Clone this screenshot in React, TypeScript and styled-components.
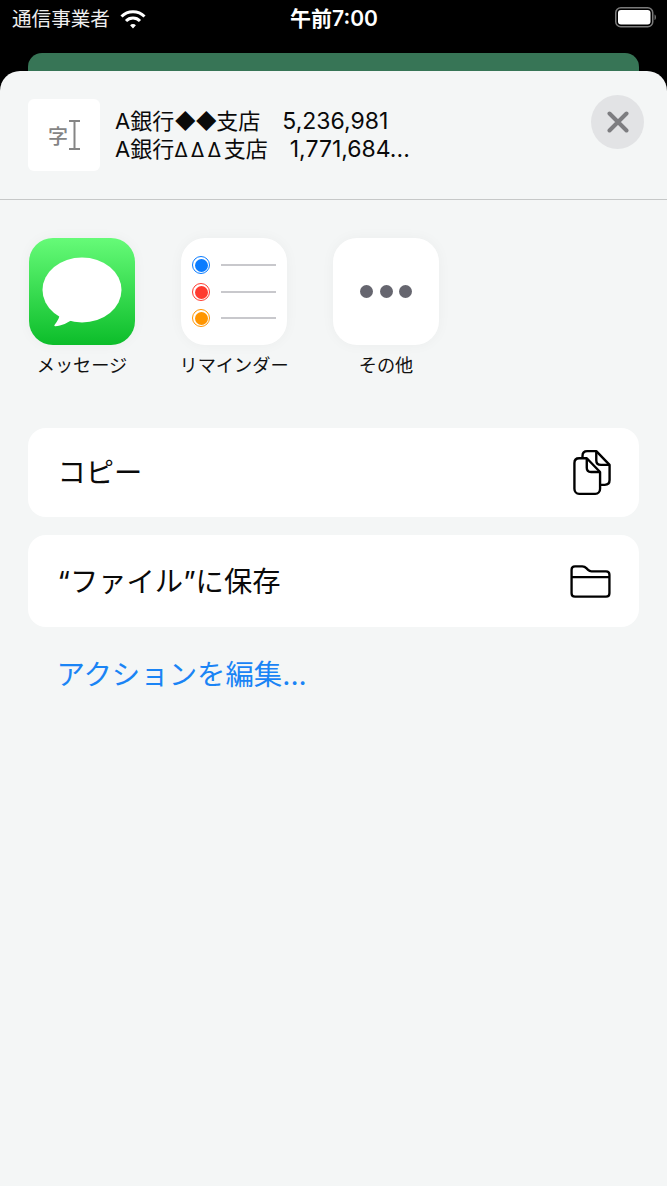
import styled, { createGlobalStyle } from "styled-components";

const GlobalStyle = createGlobalStyle`
  html, body {
    margin: 0;
    padding: 0;
    background: #000;
  }
  body {
    font-family: Inter, "Noto Sans CJK JP", sans-serif;
  }
`;

const Screen = styled.div`
  width: 667px;
  height: 1186px;
  overflow: hidden;
  display: flex;
  flex-direction: column;
  background: #000;
`;

const StatusBar = styled.div`
  height: 53px;
  flex: none;
  display: grid;
  grid-template-columns: 1fr auto 1fr;
  align-items: start;
  padding: 6px 11px 0 12px;
  box-sizing: border-box;
  color: #fff;
`;

const Carrier = styled.div`
  display: flex;
  align-items: center;
  gap: 10px;
  font-size: 19.6px;
  line-height: 26px;
  color: #eee;
`;

const Clock = styled.div`
  font-size: 21px;
  line-height: 26px;
  font-weight: 600;
`;

const Battery = styled.div`
  justify-self: end;
  display: flex;
  padding-top: 1px;
`;

const BackCard = styled.div`
  height: 18px;
  flex: none;
  margin: 0 28px;
  background: #377556;
  border-radius: 14px 14px 0 0;
`;

const Sheet = styled.div`
  flex: 1;
  background: #f4f6f6;
  border-radius: 20px 20px 0 0;
  display: flex;
  flex-direction: column;
`;

const Header = styled.div`
  height: 129px;
  flex: none;
  box-sizing: border-box;
  border-bottom: 1px solid #c6c8c8;
  display: flex;
  align-items: flex-start;
  padding: 28px 23px 0 28px;
`;

const Thumb = styled.div`
  width: 72px;
  height: 72px;
  flex: none;
  background: #fff;
  border-radius: 6px;
  display: flex;
  align-items: center;
  justify-content: center;
  gap: 1px;
  color: #858585;
  font-size: 20px;
  font-weight: 500;
`;

const Preview = styled.div`
  flex: 1;
  margin-left: 15px;
  padding-top: 8px;
  font-size: 22px;
  line-height: 28px;
  color: #0a0a0a;
  white-space: pre;
`;

const Figures = styled.span`
  font-size: 23px;
  line-height: 1;
`;

const Diamonds = styled.span`
  font-size: 21px;
  line-height: 1;
  letter-spacing: -1px;
`;

const Deltas = styled.span`
  font-size: 20px;
  line-height: 1;
  letter-spacing: 2.7px;
`;

const CloseButton = styled.div`
  width: 53px;
  height: 54px;
  margin-top: -4px;
  flex: none;
  border-radius: 50%;
  background: #e2e3e5;
  display: flex;
  align-items: center;
  justify-content: center;
`;

const AppGrid = styled.div`
  display: flex;
  gap: 46px;
  padding: 38px 0 0 29px;
`;

const AppItem = styled.div`
  width: 106px;
  display: flex;
  flex-direction: column;
  align-items: center;
`;

const AppTile = styled.div<{ $green?: boolean }>`
  width: 106px;
  height: 107px;
  border-radius: 24px;
  background: ${(p) => (p.$green ? "linear-gradient(#66fb78, #0cbd2a)" : "#fff")};
  box-shadow: 0 0 14px rgba(0, 0, 0, 0.04);
  display: flex;
  align-items: center;
  justify-content: center;
`;

const AppLabel = styled.div`
  margin-top: 8px;
  font-size: 18.2px;
  line-height: 24px;
  color: #111;
  white-space: nowrap;
`;

const Actions = styled.div`
  display: flex;
  flex-direction: column;
  gap: 18px;
  margin: 51px 28px 0;
`;

const ActionRow = styled.div<{ $height: number }>`
  height: ${(p) => p.$height}px;
  border-radius: 18px;
  background: #fff;
  display: flex;
  align-items: center;
  justify-content: space-between;
  padding: 0 28px 0 29.5px;
`;

const ActionLabel = styled.div`
  margin-bottom: 4px;
  font-size: 28.3px;
  color: #0a0a0a;
`;

const EditLink = styled.div`
  margin: 30px 0 0 56.5px;
  font-size: 28.4px;
  line-height: 36px;
  color: #1a84f5;
`;

const ReminderRow = styled.div`
  display: flex;
  align-items: center;
  gap: 10.5px;
`;

const ReminderList = styled.div`
  display: flex;
  flex-direction: column;
  gap: 8.5px;
`;

const ReminderDot = styled.div<{ $color: string }>`
  width: 18px;
  height: 18px;
  box-sizing: border-box;
  border-radius: 50%;
  border: 1.5px solid ${(p) => p.$color};
  padding: 1.5px;
  background: ${(p) => p.$color};
  background-clip: content-box;
`;

const ReminderLine = styled.div`
  width: 55px;
  height: 2px;
  background: #c8c8cc;
`;

const MoreDots = styled.div`
  display: flex;
  gap: 6.5px;
`;

const MoreDot = styled.div`
  width: 13px;
  height: 13px;
  border-radius: 50%;
  background: #66666f;
`;

const reminders = ["#0a7cff", "#ff3b30", "#ff9500"];

const App = () => {
  return (
    <Screen>
      <GlobalStyle />
      <StatusBar>
        <Carrier>
          通信事業者
          <svg width="26" height="19" viewBox="0 0 26 19" fill="none" stroke="#fff" strokeWidth="3">
            <path d="M1.500 6.500C4.500 3.400 8.500 1.700 13 1.700s8.500 1.700 11.500 4.800" />
            <path d="M6 11c1.800-1.900 4.200-3 7-3s5.200 1.100 7 3" />
            <path d="M13 14.100c-1.100 0-2.100.4-2.900 1.100l2.900 3.300 2.900-3.300c-.8-.7-1.800-1.100-2.900-1.100z" fill="#fff" stroke="none" />
          </svg>
        </Carrier>
        <Clock>午前7:00</Clock>
        <Battery>
          <svg width="41" height="21" viewBox="0 0 41 21">
            <rect x="0.750" y="0.750" width="37" height="19" rx="5" fill="none" stroke="#7b7b7b" strokeWidth="1.500" />
            <rect x="3" y="3" width="32.500" height="14.500" rx="3" fill="#fff" />
            <path d="M39.500 7.500v5.500c1-.3 1.500-1.400 1.500-2.750s-.5-2.450-1.500-2.750z" fill="#6f6f6f" />
          </svg>
        </Battery>
      </StatusBar>
      <BackCard />
      <Sheet>
        <Header>
          <Thumb>
            字
            <svg width="11" height="30" viewBox="0 0 11 30" stroke="#858585" strokeWidth="2" fill="none">
              <path d="M0 1h11M5.500 1v28M0 29h11" />
            </svg>
          </Thumb>
          <Preview>
            A銀行<Diamonds>◆◆</Diamonds>支店　<Figures>5,236,981</Figures>
            {"\n"}
            A銀行<Deltas>∆∆∆</Deltas>支店　<Figures>1,771,684...</Figures>
          </Preview>
          <CloseButton>
            <svg width="22" height="22" viewBox="0 0 22 22" stroke="#7d7d80" strokeWidth="4" strokeLinecap="round">
              <path d="M2.500 2.500l17 17M19.500 2.500l-17 17" />
            </svg>
          </CloseButton>
        </Header>
        <AppGrid>
          <AppItem>
            <AppTile $green>
              <svg width="80" height="72" viewBox="0 -1.500 80 72" fill="#fff">
                <ellipse cx="40" cy="32.500" rx="39.500" ry="32.500" />
                <path d="M19 53c-1 6-3.500 11-6.500 14.500-.6.800 0 1.300.8 1.200 6-.5 13-3 18-7.700z" />
              </svg>
            </AppTile>
            <AppLabel>メッセージ</AppLabel>
          </AppItem>
          <AppItem>
            <AppTile>
              <ReminderList>
                {reminders.map((color) => (
                  <ReminderRow key={color}>
                    <ReminderDot $color={color} />
                    <ReminderLine />
                  </ReminderRow>
                ))}
              </ReminderList>
            </AppTile>
            <AppLabel>リマインダー</AppLabel>
          </AppItem>
          <AppItem>
            <AppTile>
              <MoreDots>
                <MoreDot />
                <MoreDot />
                <MoreDot />
              </MoreDots>
            </AppTile>
            <AppLabel>その他</AppLabel>
          </AppItem>
        </AppGrid>
        <Actions>
          <ActionRow $height={89}>
            <ActionLabel>コピー</ActionLabel>
            <svg width="38" height="47" viewBox="0 0 40 48" fill="none" stroke="#000" strokeWidth="2.500" strokeLinejoin="round">
              <path d="M10 8V6.500C10 3.500 12 1.500 15 1.500h9.500L38.500 16v16c0 3-2 5-5 5h-4" />
              <path d="M24.500 1.500V11c0 3 2 5 5 5h9" />
              <path d="M1.500 14c0-3 2-5 5-5H14.500L28.500 23.500V41c0 3-2 5.500-5 5.500H6.500c-3 0-5-2.500-5-5.500z" />
              <path d="M14.500 9v10c0 3 1.500 4.500 4.500 4.500h9.500" />
            </svg>
          </ActionRow>
          <ActionRow $height={92}>
            <ActionLabel>“ファイル”に保存</ActionLabel>
            <svg width="41" height="33" viewBox="0 0 42 34" fill="none" stroke="#000" strokeWidth="2.400" strokeLinejoin="round">
              <path d="M1.500 5c0-2 1.500-3.500 3.500-3.500h7.500c2 0 3 .5 4.500 2l1.500 1.500c1 1 1.800 1.500 3.500 1.500H37c2 0 3.500 1.500 3.500 3.500V29c0 2-1.500 3.500-3.500 3.500H5c-2 0-3.500-1.500-3.500-3.500z" />
              <path d="M1.500 12.500h39" />
            </svg>
          </ActionRow>
        </Actions>
        <EditLink>アクションを編集...</EditLink>
      </Sheet>
    </Screen>
  );
};

export default App;
